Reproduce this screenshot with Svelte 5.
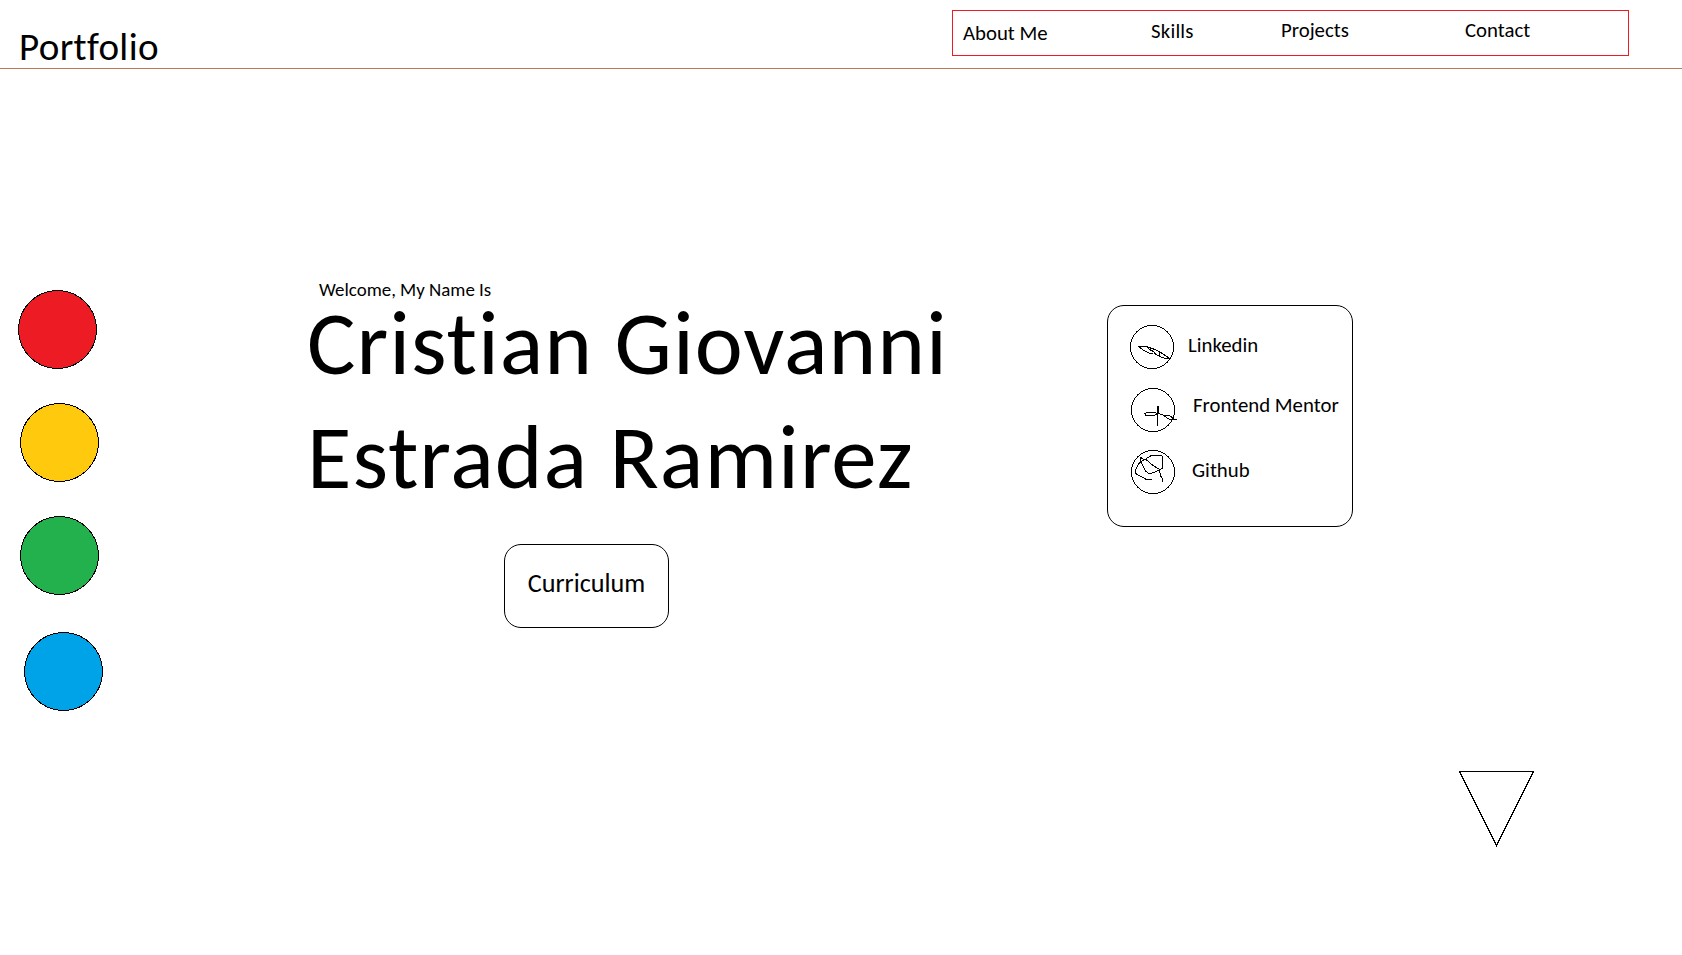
<script>
  const nav = [
    { label: 'About Me', place: 'about' },
    { label: 'Skills', place: 'skills' },
    { label: 'Projects', place: 'projects' },
    { label: 'Contact', place: 'contact' }
  ];
  const dots = [
    { color: '#ed1c24', place: 'red' },
    { color: '#ffc90e', place: 'yellow' },
    { color: '#22b14c', place: 'green' },
    { color: '#00a2e8', place: 'blue' }
  ];
  const links = [
    {
      label: 'Linkedin',
      place: 'linkedin',
      paths: [
        'M8.5 21.5L15 21.5L20 22.5L29.5 26.5L39.5 33.5L36 33.5L31 32L26 29.5L23 26L18 23.5',
        'M8.5 21.5L13 25L20 28.5H23M20.5 22V25L23 26.5M29.5 26.5V31'
      ]
    },
    {
      label: 'Frontend Mentor',
      place: 'mentor',
      paths: [
        'M26.5 18V38M27.5 18V26',
        'M26 25.5L24 24.5H16L14 25.5L15 27.5H23L27 25.5L33.5 27.5L39 28L42.5 30.5L40.5 32L36.5 30.5L33.5 28M40 31.5H46'
      ]
    },
    {
      label: 'Github',
      place: 'github',
      paths: [
        'M15 8.5L20.5 5.5H31L31.5 18.5L28.5 19.5L23.5 22.5L18 23.5L15 21.5L10 12.5L9.5 7.5L13 9.5H15L22 15.5L28.5 19.5L29.5 26L31.5 28.5V31.5',
        'M14 9.5L8.5 12.5L4.5 20V23.5L15.5 29.5H21'
      ]
    }
  ];
</script>

<header>
  <div class="brand">Portfolio</div>
  <nav>
    {#each nav as item}
      <span class={item.place}>{item.label}</span>
    {/each}
  </nav>
</header>

<main>
  <aside>
    {#each dots as dot}
      <svg class={dot.place} width="79" height="79" viewBox="0 0 79 79">
        <circle cx="39.5" cy="39.5" r="39" fill={dot.color} />
      </svg>
    {/each}
  </aside>

  <section class="hero">
    <p>Welcome, My Name Is</p>
    <h1>Cristian Giovanni<br />Estrada Ramirez</h1>
    <button>Curriculum</button>
  </section>

  <section class="card">
    {#each links as link}
      <div class="row {link.place}">
        <svg width="44" height="44" viewBox="0 0 44 44">
          <circle cx="22" cy="22" r="21.5" />
          {#each link.paths as d}<path {d} />{/each}
        </svg>
        <span>{link.label}</span>
      </div>
    {/each}
  </section>

  <svg class="arrow" width="75" height="76" viewBox="0 0 75 76">
    <path d="M0.5 0.5H74.5L37.5 74.5Z" />
  </svg>
</main>

<style>
  :global(body) {
    margin: 0;
    background: #fff;
    color: #000;
    font-family: Calibri, Carlito, Lato, sans-serif;
    font-variant-ligatures: none;
    overflow: hidden;
  }

  header {
    box-sizing: border-box;
    height: 69px;
    border-bottom: 1px solid #b97a57;
    display: flex;
    align-items: flex-start;
    justify-content: space-between;
    padding: 10px 53px 0 19px;
  }

  .brand {
    margin-top: 14px;
    font-size: 39px;
    line-height: 46px;
    letter-spacing: 0.35px;
  }

  nav {
    box-sizing: border-box;
    width: 677px;
    height: 46px;
    border: 1px solid #ed1c24;
    display: grid;
    grid-template-columns: 188px 130px 184px 1fr;
    padding-left: 10px;
    font-size: 20.8px;
    line-height: 24px;
    white-space: nowrap;
  }

  .about { margin-top: 10px; }
  .skills { margin-top: 8px; letter-spacing: 0.2px; }
  .projects, .contact { margin-top: 7px; }

  main {
    height: 886px;
    display: grid;
    grid-template-columns: 308px 799px 352px 1fr;
    align-items: start;
  }

  svg {
    display: block;
    fill: none;
    stroke: #000;
    stroke-width: 1;
    shape-rendering: crispEdges;
    overflow: visible;
  }

  aside {
    display: flex;
    flex-direction: column;
    padding: 221px 0 0 18px;
  }

  .yellow { margin: 34px 0 0 2px; }
  .green { margin: 34px 0 0 2px; }
  .blue { margin: 37px 0 0 6px; }

  .hero { padding-top: 210px; }

  p {
    margin: 0 0 0 11px;
    font-size: 18.9px;
    line-height: 22px;
  }

  h1 {
    margin: -15px 0 0 -1px;
    font-size: 91px;
    line-height: 114px;
    letter-spacing: 0.95px;
    font-weight: 400;
    white-space: nowrap;
  }

  button {
    display: block;
    box-sizing: border-box;
    width: 165px;
    height: 84px;
    margin: 30px 0 0 196px;
    padding: 0 0 6px;
    border: 1px solid #000;
    border-radius: 17px;
    background: #fff;
    color: #000;
    font-family: inherit;
    font-size: 26.2px;
    line-height: 30px;
    font-variant-ligatures: none;
  }

  .card {
    box-sizing: border-box;
    width: 246px;
    height: 222px;
    margin-top: 236px;
    padding: 19px 0 0 22px;
    border: 1px solid #000;
    border-radius: 17px;
  }

  .row {
    display: flex;
    align-items: flex-start;
    font-size: 20.8px;
    line-height: 24px;
    white-space: nowrap;
  }

  .linkedin span { margin: 8px 0 0 14px; }
  .mentor { margin: 19px 0 0 1px; }
  .mentor span { margin: 5px 0 0 18px; }
  .github { margin: 18px 0 0 1px; }
  .github span { margin: 8px 0 0 17px; }

  .arrow { margin-top: 702px; }
</style>
